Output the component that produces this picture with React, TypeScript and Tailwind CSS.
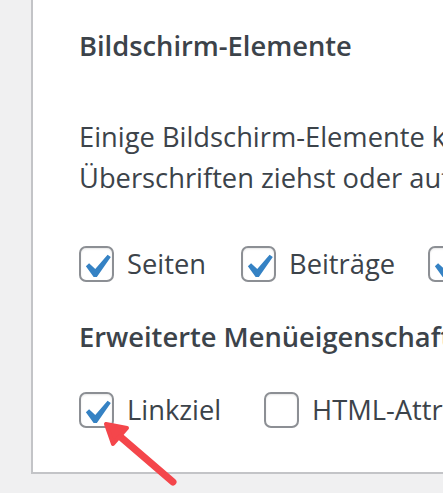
import React from "react";

function Check() {
  return (
    <svg
      className="absolute left-[-9px] top-[-5px] w-[48px] h-[48px]"
      viewBox="0 0 20 20"
    >
      <path
        d="M14.83 4.89l1.34.94-5.81 8.38H9.02L5.78 9.67l1.34-1.25 2.57 2.4z"
        fill="#3582c4"
      />
    </svg>
  );
}

function Box({ checked }: { checked: boolean }) {
  return (
    <span className="relative shrink-0 w-[35px] h-[36px] rounded-[7px] border-2 border-[#8c8f94] bg-white shadow-[inset_0_1px_2px_rgba(0,0,0,0.1)]">
      {checked && <Check />}
    </span>
  );
}

function Item({ label, checked, w }: { label: string; checked: boolean; w: string }) {
  return (
    <label className={`flex items-center gap-[13px] shrink-0 ${w}`}>
      <Box checked={checked} />
      <span className="leading-[36px]">{label}</span>
    </label>
  );
}

export default function App() {
  return (
    <div
      className="relative w-[443px] h-[493px] overflow-hidden bg-[#f0f0f1] text-[#3c434a] text-[27.3px]"
      style={{ fontFamily: '"Open Sans", "Noto Sans", sans-serif' }}
    >
      <div className="ml-[31px] h-[474px] w-[600px] bg-white border-l-2 border-b-2 border-[#c3c4c7] pl-[46px] pt-[26px] whitespace-nowrap">
        <h2 className="font-semibold leading-[40px]">Bildschirm-Elemente</h2>
        <p className="mt-[50px] leading-[41px]">
          Einige Bildschirm-Elemente können ein- oder ausgeblendet werden,
          <br />
          Überschriften ziehst oder auf die Pfeile klickst.
        </p>
        <div className="mt-[48px] flex items-center">
          <Item label="Seiten" checked w="w-[162px]" />
          <Item label="Beiträge" checked w="w-[187px]" />
          <Item label="Benutzerdefinierte Links" checked w="w-[300px]" />
        </div>
        <h2 className="mt-[35px] font-semibold leading-[40px]">
          Erweiterte Menüeigenschaften anzeigen
        </h2>
        <div className="mt-[35px] flex items-center">
          <Item label="Linkziel" checked w="w-[185px]" />
          <Item label="HTML-Attribut title" checked={false} w="w-[320px]" />
        </div>
      </div>
      <svg className="absolute inset-0 pointer-events-none" width="443" height="493">
        <line
          x1="173"
          y1="482"
          x2="116"
          y2="433"
          stroke="#f4464b"
          strokeWidth="7"
          strokeLinecap="round"
        />
        <polygon
          points="106,424 127,428 113,444"
          fill="#f4464b"
          stroke="#f4464b"
          strokeWidth="4"
          strokeLinejoin="round"
        />
      </svg>
    </div>
  );
}
